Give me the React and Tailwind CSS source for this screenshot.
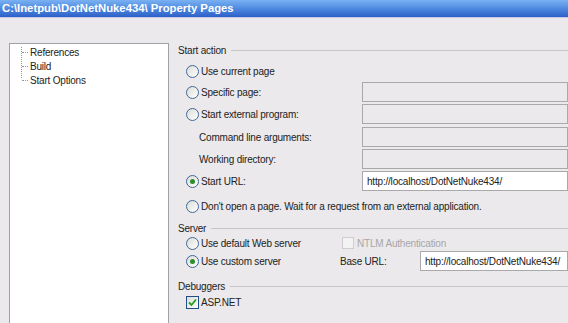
import React from "react";

const font = { fontFamily: '"Liberation Sans", Arial, sans-serif' };
const T = "text-[10px] tracking-[-0.2px] text-[#222]";

function Radio({ checked }) {
  return (
    <span className="relative flex h-[13px] w-[13px] shrink-0 items-center justify-center rounded-full border border-[#3d6a9c] bg-gradient-to-br from-[#dcdcd6] to-[#ffffff]">
      {checked && <span className="h-[5px] w-[5px] rounded-full bg-[#2f8c2f]" />}
    </span>
  );
}

function Box({ filled, children, className = "" }) {
  return (
    <div
      className={
        "flex h-[20px] items-center border border-[#a9a9a9] pl-[4px] text-[10px] tracking-[-0.2px] text-[#222] " +
        (filled ? "bg-white" : "bg-[#ebe9eb]") +
        " " +
        className
      }
    >
      {children}
    </div>
  );
}

function Header({ label, className = "" }) {
  return (
    <div className={"flex h-[14px] items-center " + className}>
      <span className={T}>{label}</span>
      <div className="ml-[5px] flex-1 border-t border-[#c7c5c8]" />
    </div>
  );
}

function RadioRow({ checked, label, className = "", right = null }) {
  return (
    <div className={"flex h-[20px] items-center " + className}>
      <div className="flex w-[184px] items-center gap-[2px] pl-[8px]">
        <Radio checked={checked} />
        <span className={T + " whitespace-nowrap"}>{label}</span>
      </div>
      {right}
    </div>
  );
}

export default function App() {
  return (
    <div className="h-[323px] w-[568px] overflow-hidden bg-[#ebe9eb]" style={font}>
      <div className="flex h-[18px] items-center border-b border-[#c9cbe6] bg-gradient-to-b from-[#7ab1f2] via-[#4f8ae0] to-[#2d5fc8] pl-[2px]">
        <span className="text-[11.3px] font-bold text-white">
          C:\Inetpub\DotNetNuke434\ Property Pages
        </span>
      </div>
      <div className="flex">
        <div className="ml-[9px] mt-[25px] h-[300px] w-[160px] border border-[#9fa3a8] bg-white">
          <div className={"relative pl-[12px] pt-[1px] " + T}>
            <div className="absolute left-[11px] top-[3px] h-[31px] border-l border-dotted border-[#999]" />
            {["References", "Build", "Start Options"].map((t) => (
              <div key={t} className="flex h-[14px] items-center">
                <div className="w-[6px] border-t border-dotted border-[#999]" />
                <span className="ml-[1px] px-[1px]">{t}</span>
              </div>
            ))}
          </div>
        </div>
        <div className="ml-[9px] flex-1 pt-[25px]">
          <Header label="Start action" />
          <RadioRow checked={false} label="Use current page" className="mt-[4px]" />
          <RadioRow checked={false} label="Specific page:" className="mt-[1px]" right={<Box className="flex-1" />} />
          <RadioRow checked={false} label="Start external program:" className="mt-[2px]" right={<Box className="flex-1" />} />
          <div className="mt-[3px] flex h-[20px] items-center">
            <span className={"w-[184px] pl-[21px] " + T}>Command line arguments:</span>
            <Box className="flex-1" />
          </div>
          <div className="mt-[2px] flex h-[20px] items-center">
            <span className={"w-[184px] pl-[21px] " + T}>Working directory:</span>
            <Box className="flex-1" />
          </div>
          <RadioRow
            checked
            label="Start URL:"
            className="mt-[2px]"
            right={
              <Box filled className="flex-1">
                http://localhost/DotNetNuke434/
              </Box>
            }
          />
          <RadioRow
            checked={false}
            label="Don't open a page. Wait for a request from an external application."
            className="mt-[5px]"
          />
          <Header label="Server" className="mt-[5px]" />
          <div className="flex h-[16px] items-center">
            <div className="flex w-[164px] items-center gap-[2px] pl-[8px]">
              <Radio />
              <span className={T}>Use default Web server</span>
            </div>
            <span className="h-[12px] w-[12px] border border-[#cfcdd0] bg-[#f4f3f4]" />
            <span className="ml-[3px] text-[10px] tracking-[-0.2px] text-[#a8a6a8]">NTLM Authentication</span>
          </div>
          <div className="flex h-[20px] items-center">
            <div className="flex w-[162px] items-center gap-[2px] pl-[8px]">
              <Radio checked />
              <span className={T}>Use custom server</span>
            </div>
            <span className={"w-[80px] " + T}>Base URL:</span>
            <Box filled className="flex-1">
              http://localhost/DotNetNuke434/
            </Box>
          </div>
          <Header label="Debuggers" className="mt-[8px]" />
          <div className="mt-[1px] flex h-[16px] items-center gap-[2px] pl-[8px]">
            <span className="flex h-[13px] w-[13px] items-center justify-center border border-[#1e4f86] bg-gradient-to-br from-[#dcdcd6] to-white">
              <svg width="9" height="9" viewBox="0 0 9 9">
                <path d="M1 4.5 L3.5 7 L8 1.5" stroke="#21a121" strokeWidth="1.8" fill="none" />
              </svg>
            </span>
            <span className={T}>ASP.NET</span>
          </div>
        </div>
      </div>
    </div>
  );
}
